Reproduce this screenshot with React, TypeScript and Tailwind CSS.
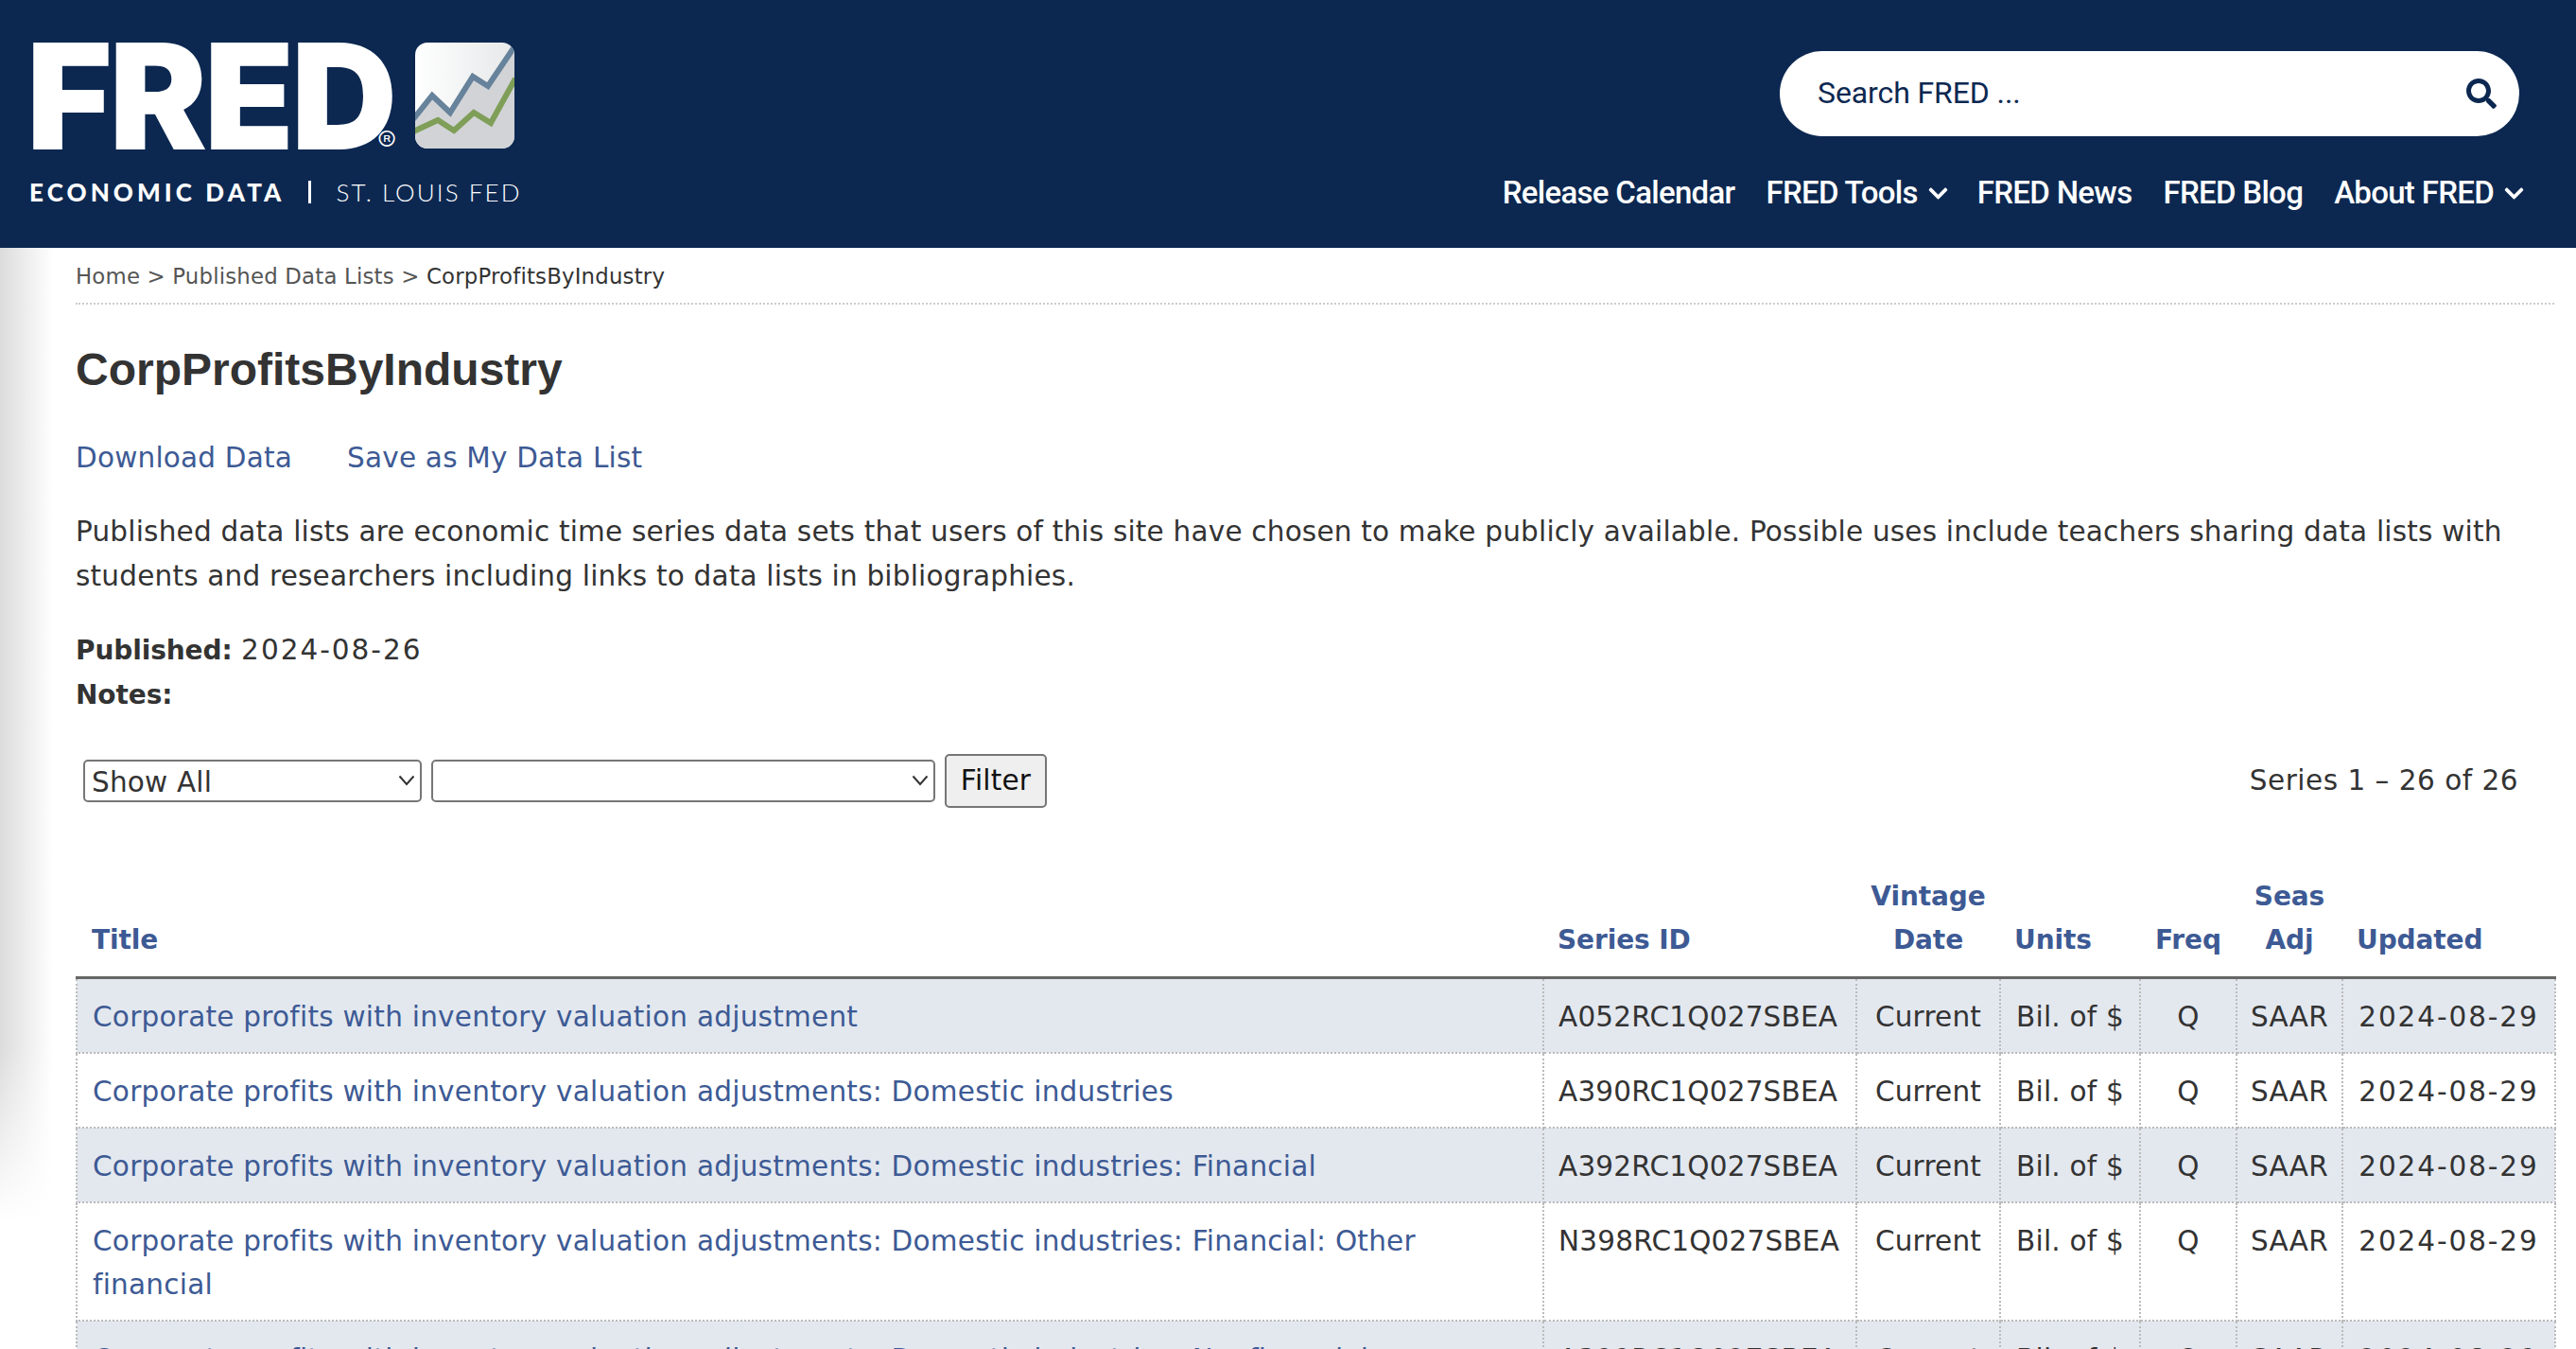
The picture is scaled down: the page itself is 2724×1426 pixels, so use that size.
import { FaSearch, FaChevronDown } from "react-icons/fa";

const rows = [
  ["Corporate profits with inventory valuation adjustment", "A052RC1Q027SBEA"],
  ["Corporate profits with inventory valuation adjustments: Domestic industries", "A390RC1Q027SBEA"],
  ["Corporate profits with inventory valuation adjustments: Domestic industries: Financial", "A392RC1Q027SBEA"],
  ["Corporate profits with inventory valuation adjustments: Domestic industries: Financial: Other financial", "N398RC1Q027SBEA"],
  ["Corporate profits with inventory valuation adjustments: Domestic industries: Nonfinancial", "A399RC1Q027SBEA"],
];

function ChartMark() {
  return (
    <svg width="105" height="112" viewBox="0 0 105 112" className="ml-[27px] mt-[-2px] shrink-0">
      <defs>
        <linearGradient id="g" x1="0" x2="1" y1="0" y2="0">
          <stop offset="0" stopColor="#ffffff" />
          <stop offset="1" stopColor="#e6e8e9" />
        </linearGradient>
        <clipPath id="c">
          <rect width="105" height="112" rx="13" />
        </clipPath>
      </defs>
      <g clipPath="url(#c)">
        <rect width="105" height="112" fill="url(#g)" />
        <path d="M0 78L18 56L37 74L61 36L77 46L105 5V112H0Z" fill="#d1d3d6" />
        <path d="M-2 81L18 56L37 74L61 36L77 46L106 3" fill="none" stroke="#67829b" strokeWidth="6" />
        <path d="M-2 94L24 82L41 93L62 74L80 85L106 38" fill="none" stroke="#7f9e58" strokeWidth="6" />
      </g>
    </svg>
  );
}

function Caret() {
  return (
    <svg width="18" height="12" viewBox="0 0 18 12" className="pointer-events-none absolute right-[7px] top-[16px]">
      <path d="M1.5 1.5L9 10L16.5 1.5" fill="none" stroke="#333" strokeWidth="2" />
    </svg>
  );
}

export default function App() {
  const th = "border-b-[3px] border-[#666] text-[#3d5a94] text-[28px] font-bold align-bottom pb-[15px] px-[15px] leading-[46px] tracking-[-0.1px]";
  const td = "border-2 border-dotted border-[#bbb] align-top pt-[17px] pb-[14px] leading-[46px]";
  return (
    <div className="relative h-screen overflow-hidden bg-white font-['DejaVu_Sans',sans-serif] text-[29.5px] tracking-[0.2px] text-[#333]">
      <header className="flex h-[262px] justify-between bg-[#0c2851] pr-[54px] font-['Roboto',sans-serif] text-white">
        <div className="pl-[28px]">
          <div className="flex h-[157px] items-end">
            <div className="relative h-[110px] w-[384px] whitespace-nowrap font-['Inter',sans-serif] text-[155px] font-black leading-[110px] tracking-[-3px]">
              FRED
              <span className="absolute left-[371px] top-[90px] text-[30px] font-light leading-[24px] tracking-normal">®</span>
            </div>
            <ChartMark />
          </div>
          <div className="mt-[31px] flex items-center pl-[3px] font-['Lato',sans-serif] text-[26px] leading-[30px]">
            <span className="font-black tracking-[4.1px]">ECONOMIC DATA</span>
            <span className="ml-[25px] h-[24px] w-[3px] bg-white" />
            <span className="ml-[26px] font-light tracking-[2.1px]">ST. LOUIS FED</span>
          </div>
        </div>
        <div className="flex flex-col items-end">
          <div className="mr-[6px] mt-[54px] flex h-[90px] w-[782px] items-center justify-between rounded-[45px] bg-white pl-[40px] pr-[24px] text-[32px] tracking-[-0.1px] text-[#0c2851]">
            <span className="pb-[2px]">Search FRED ...</span>
            <FaSearch className="text-[32px]" />
          </div>
          <nav className="mt-[37px] flex h-[46px] items-center gap-[33px] text-[33px] font-medium leading-[46px] tracking-[-0.7px]">
            <span>Release Calendar</span>
            <span className="mr-[-3px] flex items-center gap-[10px]">FRED Tools <FaChevronDown className="text-[23px]" /></span>
            <span>FRED News</span>
            <span>FRED Blog</span>
            <span className="flex items-center gap-[10px]">About FRED <FaChevronDown className="text-[23px]" /></span>
          </nav>
        </div>
      </header>

      <main className="pl-[80px] pr-[23px]">
        <div className="flex h-[60px] items-center border-b-2 border-dotted border-[#ccc] pt-[2px] text-[22.8px] text-[#555]">
          <span>Home &gt; Published Data Lists &gt; <span className="text-[#333]">CorpProfitsByIndustry</span></span>
        </div>
        <h1 className="mt-[40px] font-['Liberation_Sans',sans-serif] text-[48px] font-bold leading-[58px] tracking-normal">CorpProfitsByIndustry</h1>
        <div className="mt-[41px] flex gap-[58px] leading-[46px] text-[#3d5a94]">
          <span>Download Data</span>
          <span>Save as My Data List</span>
        </div>
        <p className="mt-[32px] pr-[40px] leading-[47px]">
          Published data lists are economic time series data sets that users of this site have chosen to make publicly available. Possible uses include teachers sharing data lists with students and researchers including links to data lists in bibliographies.
        </p>
        <p className="mt-[31px] leading-[46px]">
          <b className="text-[28px] tracking-[-0.1px]">Published:</b> <span className="tracking-[2px]">2024-08-26</span><br />
          <b className="text-[28px] tracking-[-0.1px]">Notes:</b>
        </p>
        <div className="mt-[39px] flex items-center justify-between pl-[8px] pr-[38px]">
          <div className="flex items-center gap-[10px]">
            <div className="relative">
              <select className="block h-[45px] w-[358px] appearance-none rounded-[5px] border-2 border-[#767676] px-[7px]" defaultValue="Show All">
                <option>Show All</option>
              </select>
              <Caret />
            </div>
            <div className="relative">
              <select className="block h-[45px] w-[533px] appearance-none rounded-[5px] border-2 border-[#767676]">
                <option></option>
              </select>
              <Caret />
            </div>
            <button className="h-[57px] w-[108px] rounded-[5px] border-2 border-[#767676] bg-[#efefef] text-[#111]">Filter</button>
          </div>
          <span className="tracking-[0.5px]">Series 1 – 26 of 26</span>
        </div>
        <table className="mt-[71px] w-[2621px] table-fixed border-collapse">
          <colgroup>
            <col className="w-[1551px]" />
            <col className="w-[331px]" />
            <col className="w-[152px]" />
            <col className="w-[148px]" />
            <col className="w-[102px]" />
            <col className="w-[112px]" />
            <col className="w-[225px]" />
          </colgroup>
          <thead>
            <tr>
              <th className={th + " text-left pl-[16px]"}>Title</th>
              <th className={th + " text-left"}>Series ID</th>
              <th className={th + " text-center"}>Vintage Date</th>
              <th className={th + " text-left"}>Units</th>
              <th className={th + " text-center"}>Freq</th>
              <th className={th + " text-center"}>Seas Adj</th>
              <th className={th + " text-left"}>Updated</th>
            </tr>
          </thead>
          <tbody>
            {rows.map(([title, id], i) => (
              <tr key={id} className={i % 2 === 0 ? "bg-[#e3e8ef]" : "bg-white"}>
                <td className={td + " pl-[16px] pr-[100px] tracking-[0.25px] text-[#3d5a94]"}>{title}</td>
                <td className={td + " pl-[15px] whitespace-nowrap"}>{id}</td>
                <td className={td + " text-center"}>Current</td>
                <td className={td + " text-center whitespace-nowrap"}>Bil. of $</td>
                <td className={td + " text-center"}>Q</td>
                <td className={td + " text-center"}>SAAR</td>
                <td className={td + " text-center tracking-[1.9px]"}>2024-08-29</td>
              </tr>
            ))}
          </tbody>
        </table>
      </main>

      <div className="pointer-events-none absolute left-0 top-[262px] h-[1030px] w-[56px] bg-gradient-to-r from-[#dcdcdc] to-transparent [mask-image:linear-gradient(to_bottom,black_82%,transparent)]" />
    </div>
  );
}
